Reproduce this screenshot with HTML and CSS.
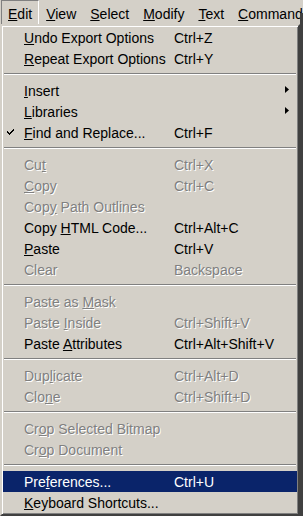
FILE: index.html
```html
<!DOCTYPE html>
<html lang="en">
<head>
    <meta charset="UTF-8">
    <meta name="viewport" content="width=device-width, initial-scale=1.0">
    <title>Edit Menu</title>
    <link rel="stylesheet" href="styles.css">
</head>
<body>
    <div class="app">
        <!-- Barra de menús -->
        <div class="menubar">
            <span class="menubar-item is-open"><u>E</u>dit</span>
            <span class="menubar-item"><u>V</u>iew</span>
            <span class="menubar-item"><u>S</u>elect</span>
            <span class="menubar-item"><u>M</u>odify</span>
            <span class="menubar-item"><u>T</u>ext</span>
            <span class="menubar-item"><u>C</u>ommands</span>
        </div>

        <!-- Menú desplegable Edit -->
        <div class="menu">
            <div class="menu-item"><span class="check"></span><span class="label"><u>U</u>ndo Export Options</span><span class="shortcut">Ctrl+Z</span></div>
            <div class="menu-item"><span class="check"></span><span class="label"><u>R</u>epeat Export Options</span><span class="shortcut">Ctrl+Y</span></div>
            <div class="menu-sep"></div>

            <div class="menu-item"><span class="check"></span><span class="label"><u>I</u>nsert</span><span class="shortcut"></span><span class="sub"><svg width="4" height="7" viewBox="0 0 4 7"><path d="M0 0 L4 3.5 L0 7 Z" fill="#000"/></svg></span></div>
            <div class="menu-item"><span class="check"></span><span class="label"><u>L</u>ibraries</span><span class="shortcut"></span><span class="sub"><svg width="4" height="7" viewBox="0 0 4 7"><path d="M0 0 L4 3.5 L0 7 Z" fill="#000"/></svg></span></div>
            <div class="menu-item"><span class="check"><svg width="8" height="8" viewBox="0 0 8 8" shape-rendering="crispEdges"><path d="M0 3 L2 5 L7 0 L7 2 L2 7 L0 5 Z" fill="#000"/></svg></span><span class="label"><u>F</u>ind and Replace...</span><span class="shortcut">Ctrl+F</span></div>
            <div class="menu-sep"></div>

            <div class="menu-item is-disabled"><span class="check"></span><span class="label">Cu<u>t</u></span><span class="shortcut">Ctrl+X</span></div>
            <div class="menu-item is-disabled"><span class="check"></span><span class="label"><u>C</u>opy</span><span class="shortcut">Ctrl+C</span></div>
            <div class="menu-item is-disabled"><span class="check"></span><span class="label">Cop<u>y</u> Path Outlines</span><span class="shortcut"></span></div>
            <div class="menu-item"><span class="check"></span><span class="label">Copy <u>H</u>TML Code...</span><span class="shortcut">Ctrl+Alt+C</span></div>
            <div class="menu-item"><span class="check"></span><span class="label"><u>P</u>aste</span><span class="shortcut">Ctrl+V</span></div>
            <div class="menu-item is-disabled"><span class="check"></span><span class="label">Clear</span><span class="shortcut">Backspace</span></div>
            <div class="menu-sep"></div>

            <div class="menu-item is-disabled"><span class="check"></span><span class="label">Paste as <u>M</u>ask</span><span class="shortcut"></span></div>
            <div class="menu-item is-disabled"><span class="check"></span><span class="label">Paste <u>I</u>nside</span><span class="shortcut">Ctrl+Shift+V</span></div>
            <div class="menu-item"><span class="check"></span><span class="label">Paste <u>A</u>ttributes</span><span class="shortcut">Ctrl+Alt+Shift+V</span></div>
            <div class="menu-sep"></div>

            <div class="menu-item is-disabled"><span class="check"></span><span class="label">Dup<u>l</u>icate</span><span class="shortcut">Ctrl+Alt+D</span></div>
            <div class="menu-item is-disabled"><span class="check"></span><span class="label">Clo<u>n</u>e</span><span class="shortcut">Ctrl+Shift+D</span></div>
            <div class="menu-sep"></div>

            <div class="menu-item is-disabled"><span class="check"></span><span class="label">Cr<u>o</u>p Selected Bitmap</span><span class="shortcut"></span></div>
            <div class="menu-item is-disabled"><span class="check"></span><span class="label">Cr<u>o</u>p Document</span><span class="shortcut"></span></div>
            <div class="menu-sep"></div>

            <div class="menu-item is-active"><span class="check"></span><span class="label">Pre<u>f</u>erences...</span><span class="shortcut">Ctrl+U</span></div>
            <div class="menu-item"><span class="check"></span><span class="label"><u>K</u>eyboard Shortcuts...</span><span class="shortcut"></span></div>
        </div>
    </div>
</body>
</html>
```

FILE: styles.css
```css
/* Colores clásicos de Windows */
:root {
    --face: #d4d0c8;
    --shadow: #808080;
    --dark: #404040;
    --light: #ffffff;
    --highlight: #0a246a;
}

html,
body {
    margin: 0;
    padding: 0;
}

body {
    background-color: var(--face);
    font-family: "Liberation Sans", Arial, sans-serif;
    font-size: 14px;
    color: #000;
    overflow: hidden;
}

u {
    text-decoration: underline;
    text-underline-offset: 1px;
}

.app {
    position: relative;
    width: 303px;
    height: 516px;
    overflow: hidden;
}

/* Borde oscuro de la ventana a la derecha */
.app::after {
    content: "";
    position: absolute;
    top: 13px;
    right: 0;
    bottom: 0;
    width: 3px;
    background-color: var(--dark);
}

/* Barra de menús */
.menubar {
    display: flex;
    height: 24px;
    white-space: nowrap;
}

.menubar-item {
    padding: 5px 6px 0 6px;
    line-height: 16px;
    height: 21px;
    border: 1px solid transparent;
}

.menubar-item:first-child {
    margin-left: 1px;
}

.menubar-item.is-open {
    border-color: var(--shadow) var(--light) var(--light) var(--shadow);
}

/* Menú desplegable */
.menu {
    width: 294px;
    padding: 1px;
    border: 2px solid;
    border-color: var(--face) var(--dark) var(--dark) var(--face);
    box-shadow: inset 1px 1px 0 var(--light), inset -1px -1px 0 var(--shadow);
    background-color: var(--face);
    position: relative;
    z-index: 1;
}

.menu-item {
    display: grid;
    grid-template-columns: 21px 150px 1fr 12px;
    align-items: start;
    height: 20px;
    padding-top: 1px;
    line-height: 20px;
    white-space: nowrap;
}

.check {
    display: flex;
    padding: 5px 0 0 4px;
}

.sub {
    display: flex;
    padding-top: 5px;
}

.menu-item.is-disabled {
    color: var(--shadow);
    text-shadow: 1px 1px 0 var(--light);
}

.menu-item.is-active {
    background-color: var(--highlight);
    color: #fff;
}

.menu-sep {
    height: 2px;
    margin: 4px 1px 5px;
    border-top: 1px solid var(--shadow);
    border-bottom: 1px solid var(--light);
    box-sizing: border-box;
}
```
